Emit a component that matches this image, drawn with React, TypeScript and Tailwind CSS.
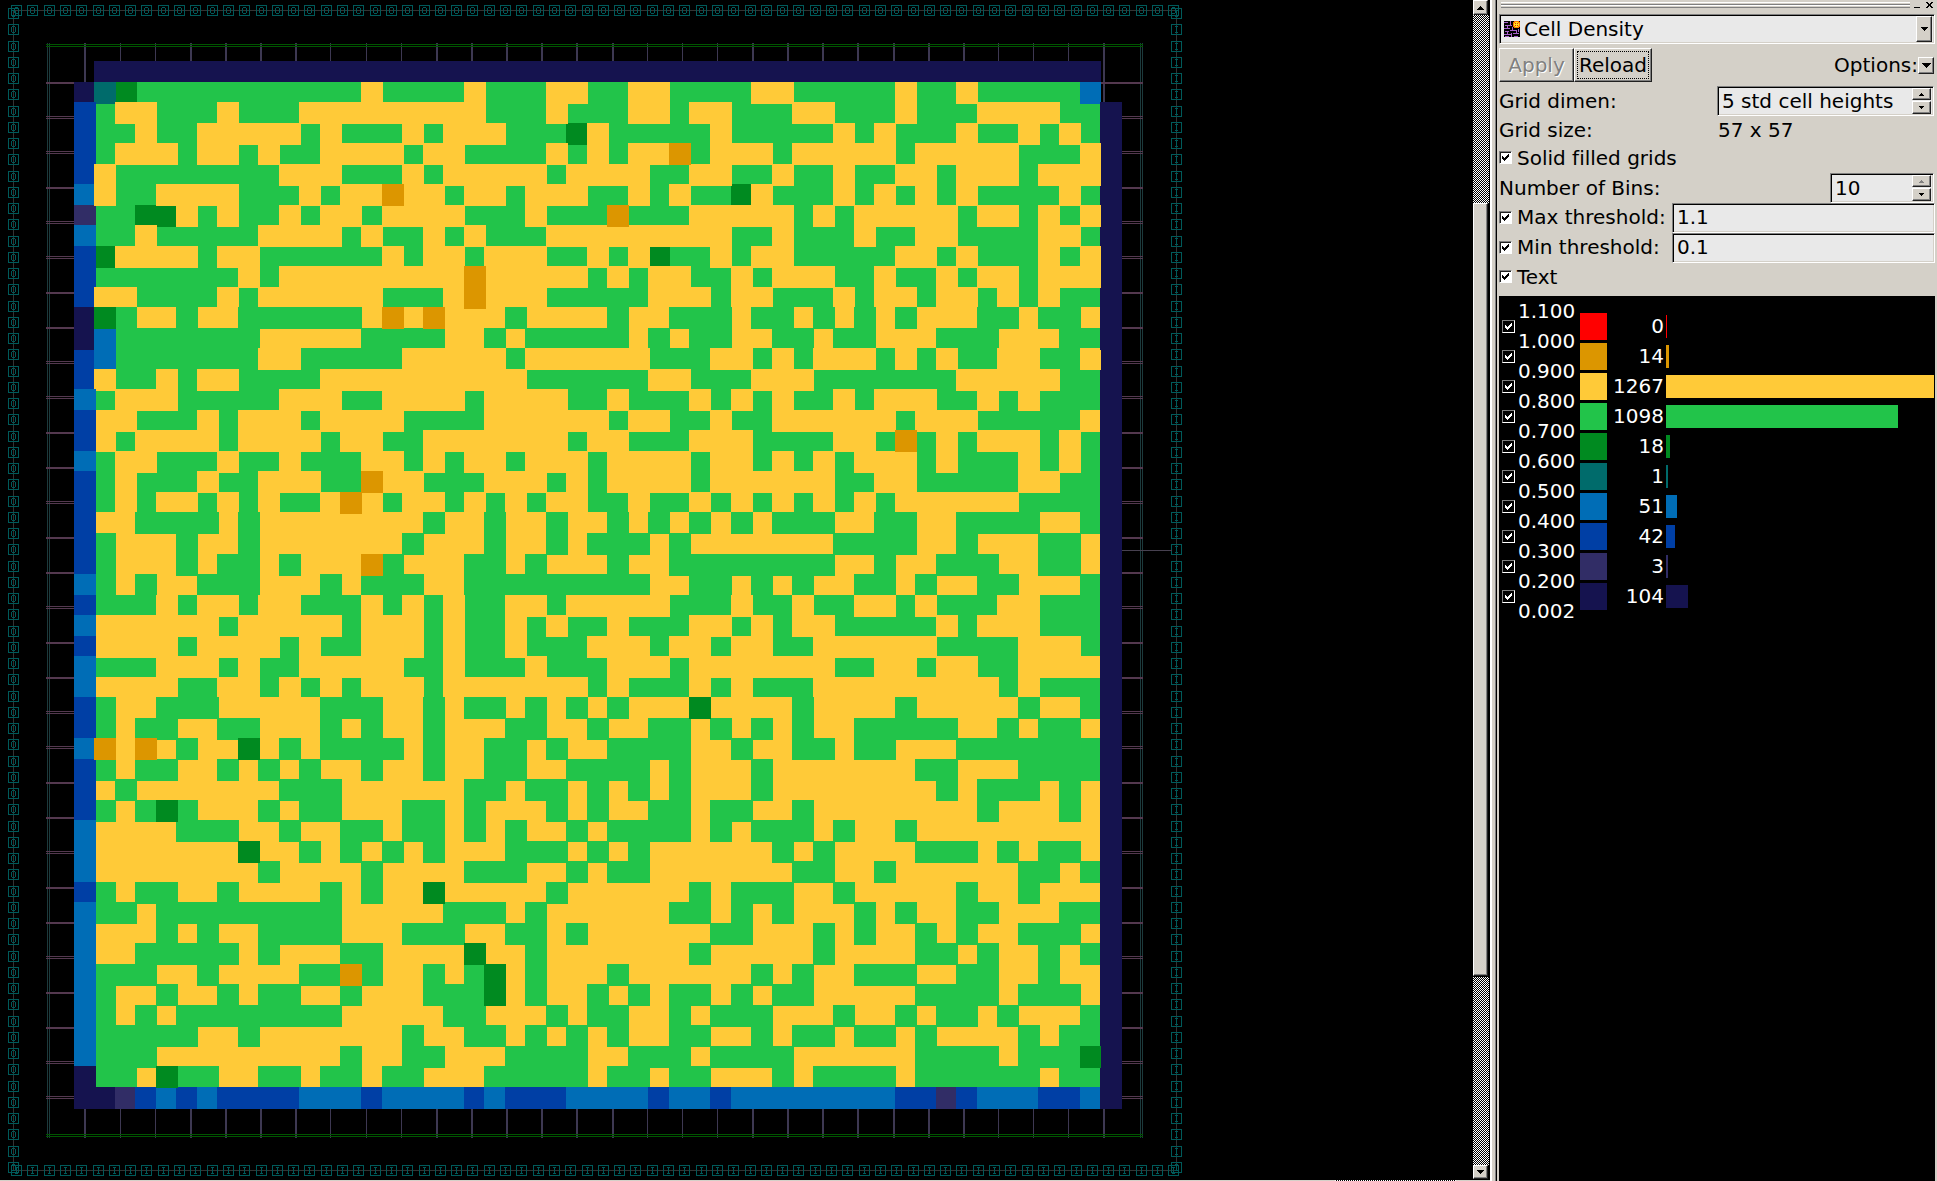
import React from "react";

const COLORS: Record<string, string> = {
  r: "#ff0000",
  o: "#dc9600",
  y: "#ffca38",
  g: "#22c44a",
  d: "#008a20",
  t: "#006b6b",
  b: "#006db6",
  B: "#003fa5",
  p: "#312d66",
  n: "#15134f",
};

// One string per grid row; each token is a bin code and the column where it starts.
const ROWS: string[] = [
  ".0 n1 .50",
  "n0 t1 d2 g3 y14 g15 y19 g20 y23 g25 y27 g29 y33 g35 y40 g41 y43 g44 b49 .50",
  "B0 g1 y2 g4 y7 g8 y11 g20 y23 g24 y27 g29 y30 g32 y35 g37 y40 g41 y44 g48 n50",
  "B0 g1 y3 g4 y6 g11 y12 g13 y16 g17 y18 g21 d24 y25 g26 y31 g32 y37 g38 y39 g40 y43 g44 y46 g47 y48 g49 n50",
  "B0 g1 y2 g5 y6 g8 y9 g10 y12 g16 y17 g19 y23 g24 y25 g26 y27 o29 g30 y31 g34 y35 g40 y41 g46 y49 n50",
  "B0 y1 g2 y10 g13 y16 g17 y18 g23 y24 g28 y30 g32 y34 g35 y37 g38 y40 g42 y43 g46 y47 n50",
  "b0 y1 g2 y4 g8 y11 g12 y13 o15 y16 g18 y19 g21 y22 g25 y27 g28 y29 g30 d32 y33 g34 y37 g38 y39 g40 y41 g42 y43 g44 y48 g49 n50",
  "p0 g1 d3 y5 g6 y7 g8 y10 g11 y12 g14 y15 g19 y22 g23 o26 g27 y30 g35 y36 g37 y38 g43 y44 g46 y47 g48 y49 n50",
  "b0 g1 y3 g4 y9 g13 y14 g15 y17 g18 y19 g20 y23 g32 y34 g35 y38 g39 y41 g43 y47 g49 n50",
  "B0 d1 y2 g6 y7 g9 y15 g16 y17 g19 y20 g23 y25 g26 y27 d28 g29 y31 g32 y33 g35 y40 g42 y43 g44 y47 g48 y49 n50",
  "B0 g1 y8 g9 y10 o19 y20 g25 y26 g27 y28 g30 y32 g33 y34 g37 y39 g40 y42 g43 y44 g46 y47 n50",
  "B0 y1 g3 y7 g8 y9 g15 y18 o19 y20 g23 y28 g31 y32 g34 y37 g38 y39 g41 y42 g44 y45 g46 y47 g48 n50",
  "n0 d1 g2 y3 g5 y6 g8 y14 o15 y16 o17 y18 g21 y22 g26 y27 g29 y32 g33 y35 g36 y37 g38 y39 g40 y41 g44 y46 g47 y49 n50",
  "n0 b1 g2 y9 g14 y18 g20 y21 g22 y27 g28 y29 g30 y32 g34 y36 g37 y39 g42 y45 g48 n50",
  "B0 b1 g2 y9 g11 y16 g21 y22 g28 y31 g33 y34 g35 y36 g39 y40 g41 y42 g43 y45 g47 y49 n50",
  "B0 y1 g2 y4 g5 y6 g8 y12 g22 y28 g30 y33 g36 y43 g48 n50",
  "b0 g1 y2 g5 y10 g13 y15 g19 y20 g24 y26 g27 y30 g31 y32 g33 y34 g35 y37 g38 y39 g42 y44 g45 y46 g47 n50",
  "B0 y1 g3 y6 g7 y8 g11 y12 g16 y20 g26 y27 g29 y31 g32 y34 g40 y41 g44 y49 n50",
  "B0 y1 g2 y3 g7 y8 g12 y13 g15 y17 g24 y25 g27 y30 g33 y37 g39 o40 g41 y42 g43 y44 g47 y48 g49 n50",
  "b0 g1 y2 g4 y7 g8 y10 g11 y14 g16 y17 g18 y19 g21 y22 g25 y26 g30 y31 g33 y34 g35 y36 g37 y38 g41 y42 g43 y46 g47 y48 g49 n50",
  "B0 g1 y2 g3 y6 g7 y9 g12 o14 y15 g17 y20 g23 y24 g25 y26 g30 y31 g37 y39 g41 y46 g48 n50",
  "B0 g1 y2 g3 y4 g6 y7 g8 y9 g10 y12 o13 y14 g15 y16 g18 y19 g20 y21 g22 y23 g25 y27 g28 y30 g31 y32 g33 y34 g35 y36 g37 y38 g39 y40 g46 n50",
  "B0 y1 g3 y7 g8 y9 g17 y18 g20 y21 g23 y24 g26 y27 g28 y29 g30 y31 g32 y33 g34 y37 g39 y41 g43 y47 g49 n50",
  "B0 g1 y2 g5 y6 g8 y9 g16 y17 g20 y21 g23 y24 g25 y28 g29 y30 g37 y41 g43 y44 g47 y49 n50",
  "B0 g1 y2 g5 y6 g7 y9 g10 y11 o14 g15 y16 g19 y21 g22 y23 g26 y27 g29 y37 g39 y40 g42 y45 g47 y49 n50",
  "b0 g1 y2 g3 y4 g6 y9 g12 y13 g14 y17 g19 y28 g30 y32 g33 y34 g35 y36 g38 y40 g41 y42 g44 y46 g49 n50",
  "B0 g1 y4 g5 y6 g8 y9 g11 y14 g15 y16 g17 y18 g19 y21 g23 y24 g29 y32 g33 y35 g36 y38 g40 y41 g42 y45 g47 n50",
  "b0 y1 g7 y8 g13 y14 g17 y18 g19 y21 g22 y23 g24 y26 g27 y30 g32 y33 g34 y35 g37 y42 g43 y44 g47 n50",
  "B0 y1 g5 y6 g10 y11 g12 y14 g17 y18 g19 y21 g22 y25 g28 y29 g31 y32 g34 y36 g42 y46 g49 n50",
  "b0 g1 y4 g7 y8 g9 y11 g16 y18 g19 y22 g23 y26 g29 y30 g37 y39 g41 y42 g44 y46 n50",
  "b0 y1 g5 y7 g9 y10 g11 y12 g13 y14 g17 y18 g25 y26 g27 y30 g31 y32 g33 y36 g45 y46 g47 n50",
  "B0 g1 y2 g4 y7 g12 y15 g17 y18 g19 y21 g22 y23 g24 y25 g26 y27 d30 y31 g35 y36 g40 y41 g46 y47 g49 n50",
  "B0 g1 y2 g3 y5 g7 y9 g12 y13 g14 y15 g17 y18 g21 y23 g25 y26 g28 y30 g31 y32 g33 y34 g35 y36 g38 y43 g45 y46 g47 y49 n50",
  "b0 o1 y2 o3 y4 g5 y6 d8 y9 g10 y11 g12 y16 g17 y18 g20 y22 g23 y24 g26 y30 g32 y33 g35 y37 g38 y40 g43 n50",
  "B0 g1 y2 g3 y5 g7 y8 g9 y10 g11 y12 g14 y15 g17 y18 g20 y22 g24 y28 g29 y30 g33 y34 g41 y43 g46 n50",
  "B0 y1 g2 y3 g10 y13 g19 y21 g22 y24 g25 y26 g27 y28 g29 y30 g33 y34 g42 y43 g44 y47 g48 y49 n50",
  "B0 g1 y2 g3 d4 g5 y6 g9 y10 g11 y13 g16 y18 g19 y20 g23 y24 g25 y26 g28 y30 g31 y33 g35 y36 g44 y45 g48 y49 n50",
  "b0 y1 g5 y8 g10 y11 g13 y15 g16 y18 g19 y20 g21 y22 g24 y25 g26 y30 g31 y32 g33 y36 g37 y38 g40 y41 n50",
  "b0 y1 d8 y9 g11 y12 g13 y14 g15 y16 g17 y18 g21 y24 g25 y26 g27 y28 g34 y35 g36 y37 g41 y44 g45 y46 g47 y49 n50",
  "b0 y1 g9 y10 g14 y15 g19 y22 g24 y25 g26 y28 g35 y37 g39 y40 g46 y48 g49 n50",
  "B0 g1 y2 g3 y5 g7 y8 g12 y13 g14 y15 d17 y18 g23 y24 g30 y31 g32 y35 g37 y38 g43 y44 g46 y47 n50",
  "b0 g1 y3 g4 y13 g18 y21 g22 y23 g29 y31 g32 y33 g34 y35 g38 y39 g40 y41 g43 y45 g48 n50",
  "b0 y1 g4 y5 g6 y7 g9 y13 g16 y19 g21 y23 g24 y25 g31 y33 g36 y37 g38 y39 g41 y42 g43 y44 g46 y49 n50",
  "b0 y1 g3 y8 g9 y10 g13 y15 d19 y20 g22 y23 g30 y31 g36 y37 g41 y43 g44 y45 g47 y48 g49 n50",
  "b0 g1 y4 g6 y7 g11 o13 g14 y15 g17 y18 g19 d20 y21 g22 y23 g26 y27 g33 y34 g35 y36 g38 y41 g43 y45 g47 y48 n50",
  "b0 g1 y2 g4 y5 g7 y8 g9 y11 g13 y14 g17 d20 y21 g22 y23 g25 y26 g27 y28 g29 y31 g32 y33 g34 y36 g41 y45 g46 y49 n50",
  "b0 g1 y2 g3 y4 g5 y13 g18 y20 g23 y24 g25 y27 g29 y30 g31 y34 g37 y38 g40 y41 g42 y44 g45 y46 g49 n50",
  "b0 g1 y6 g8 y9 g16 y17 g19 y21 g22 y23 g24 y25 g26 y27 g29 y31 g33 y34 g35 y37 g38 y40 g41 y42 g46 y47 g48 n50",
  "b0 g1 y4 g13 y14 g16 y18 g21 y25 g27 y30 g31 y35 g41 y45 g46 d49 n50",
  "n0 g1 y3 d4 g5 y7 g9 y11 g12 y14 g15 y17 g20 y25 g26 y28 g29 y31 g34 y35 g36 y40 g41 y47 g48 n50",
  "n0 p2 B3 b4 B5 b6 B7 b11 B14 b15 B19 b20 B21 b24 B28 b29 B31 b32 B40 p42 B43 b44 B47 b49 n50",
];

// Rows whose green cells are painted above their yellow neighbours.
const greenOnTop = (r: number) =>
  r === 12 || r === 13 || (r >= 22 && r <= 25) || r >= 31;

const colX = (c: number) => Math.floor(74.05 + 20.53 * c);
const rowY = (r: number) => Math.floor(61.6 + 20.517 * r);

type Run = { x: number; y: number; w: number; fill: string; z: number };

const RUNS: Run[] = ROWS.flatMap((row, r) => {
  const tokens = row.split(" ").map((t) => ({ k: t[0], c: Number(t.slice(1)) }));
  return tokens
    .map((t, i) => {
      const end = i + 1 < tokens.length ? tokens[i + 1].c : 51;
      let z: number;
      if (r === 0) z = -1;
      else if (greenOnTop(r)) z = t.k === "y" ? 0 : t.k === "g" ? 3 : t.k === "d" || t.k === "o" ? 5 : 4;
      else z = t.k === "g" ? 0 : t.k === "d" ? 1 : t.k === "y" ? 3 : t.k === "o" ? 5 : r > 15 ? 4 : 2;
      const right = Math.min(colX(end - 1) + 22, end === 50 ? 1101 : 1122);
      return { x: colX(t.c), y: rowY(r), w: right - colX(t.c), fill: t.k, z };
    })
    .filter((run) => run.fill !== ".");
}).sort((a, b) => a.z - b.z);

const V_THIN = [1, 2, 7, 8, 9, 16, 17, 18, 26, 27, 28];
const H_DOUBLE = [1, 2, 4, 5, 8, 9, 12, 15, 18, 19, 22, 25, 28, 29];
const THIRTY = Array.from({ length: 30 }, (_, i) => i);
const PADS = Array.from({ length: 72 }, (_, i) => i);

function Pad({ x, y, kind }: { x: number; y: number; kind: "O" | "I" }) {
  return (
    <g transform={`translate(${x} ${y})`} fill="none" stroke="#005a5a" strokeWidth="1">
      <rect x="0.5" y="0.5" width="10" height="10" />
      {kind === "O" ? (
        <path d="M4 2.5H7M4 8.5H7M3.5 3V8M7.5 3V8" />
      ) : (
        <path d="M4 2.5H7M4 8.5H7M5.5 3V8" />
      )}
    </g>
  );
}

function LayoutCanvas() {
  return (
    <svg width="1473" height="1180" viewBox="0 0 1473 1180" shapeRendering="crispEdges" className="block bg-black">
      <g fill="#333333">
        <rect x="13" y="10" width="1163" height="1" />
        <rect x="13" y="1170" width="1163" height="1" />
        <rect x="13" y="10" width="1" height="1160" />
        <rect x="1176" y="10" width="1" height="1160" />
      </g>
      {PADS.map((i) => (
        <React.Fragment key={i}>
          <Pad x={Math.round(11 + i * 16.3)} y={5} kind="O" />
          <Pad x={Math.round(11 + i * 16.3)} y={1165} kind="I" />
          <Pad x={8} y={Math.round(8 + i * 16.25)} kind="O" />
          <Pad x={1171} y={Math.round(8 + i * 16.25)} kind="I" />
        </React.Fragment>
      ))}
      <g fill="#1c3a3c">
        <rect x="47" y="43" width="1" height="1095" />
        <rect x="49" y="43" width="1" height="1095" />
        <rect x="1140" y="43" width="1" height="1095" />
        <rect x="1142" y="43" width="1" height="1095" />
      </g>
      {THIRTY.map((k) => (
        <rect key={k} x={Math.floor(84.9 + 35.14 * k)} y="43" width={V_THIN.includes(k) ? 1 : 2} height="1095" fill="#3d3852" />
      ))}
      {THIRTY.map((k) => {
        const y = Math.round(82 + 35 * k);
        return H_DOUBLE.includes(k) ? (
          <g key={k} fill="#54384f">
            <rect x="46" y={y - 1} width="1097" height="1" />
            <rect x="46" y={y + 1} width="1097" height="1" />
          </g>
        ) : (
          <rect key={k} x="46" y={y} width="1097" height="2" fill="#54384f" />
        );
      })}
      <rect x="1122" y="550" width="50" height="1" fill="#474150" />
      <g fill="#005500">
        <rect x="46" y="44" width="1097" height="1" />
        <rect x="46" y="46" width="1097" height="1" />
        <rect x="46" y="1134" width="1097" height="1" />
        <rect x="46" y="1136" width="1097" height="1" />
      </g>
      <rect x="94" y="61" width="1007" height="1048" fill="#000" />
      {RUNS.map((run, i) => (
        <rect key={i} x={run.x} y={run.y} width={run.w} height="22" fill={COLORS[run.fill]} />
      ))}
    </svg>
  );
}

const ARROW_SIZES = { sm: [5, 3], md: [7, 4], lg: [9, 5] } as const;

function Arrow({ up = false, size = "md", color = "#000" }: { up?: boolean; size?: "sm" | "md" | "lg"; color?: string }) {
  const [w, h] = ARROW_SIZES[size];
  return (
    <svg width={w} height={h} viewBox={`0 0 ${w} ${h}`} className="block" shapeRendering="crispEdges">
      {Array.from({ length: h }, (_, i) => (
        <rect key={i} x={i} y={up ? h - 1 - i : i} width={w - 2 * i} height="1" fill={color} />
      ))}
    </svg>
  );
}

const RAISED =
  "flex items-center justify-center bg-[#d4d0c8] border border-t-white border-l-white border-r-[#202020] border-b-[#202020] shadow-[inset_-1px_-1px_0_#808080]";
const SUNKEN =
  "flex items-center bg-[#e9e9e9] border border-t-[#808080] border-l-[#808080] border-r-white border-b-white shadow-[inset_1px_1px_0_#000,inset_-1px_-1px_0_#d4d0c8]";

function Tick({ dark = false }: { dark?: boolean }) {
  return (
    <svg width="9" height="9" viewBox="0 0 9 9" className="block" shapeRendering="crispEdges">
      <path
        d="M1 3h1v1h1v1h1V4h1V3h1V2h1V1h1v3H7v1H6v1H5v1H4v1H3V7H2V6H1Z"
        fill={dark ? "#fff" : "#000"}
      />
    </svg>
  );
}

function Check() {
  return (
    <span className="flex h-[13px] w-[13px] shrink-0 items-center justify-center border border-t-[#808080] border-l-[#808080] border-r-white border-b-white bg-white shadow-[inset_1px_1px_0_#202020]">
      <Tick />
    </span>
  );
}

function Spin({ text, width, upDisabled = false }: { text: string; width: string; upDisabled?: boolean }) {
  return (
    <div className={`${SUNKEN} h-[30px] ${width} justify-between pl-[4px] pr-[2px]`}>
      <span>{text}</span>
      <span className="flex flex-col gap-px">
        <span className={`${RAISED} h-[12px] w-[19px]`}>
          <Arrow up size="sm" color={upDisabled ? "#808080" : "#000"} />
        </span>
        <span className={`${RAISED} h-[13px] w-[19px]`}>
          <Arrow size="sm" />
        </span>
      </span>
    </div>
  );
}

function MapIcon() {
  return (
    <svg width="16" height="16" viewBox="0 0 16 16" shapeRendering="crispEdges" className="block">
      <rect width="16" height="16" fill="#000" />
      <path
        d="M0 1.5H4M6.5 0V4M1 4.5H8M3.5 4V7M0 7.5H6M8.5 6V10M6 9.5H12M1 10.5H5M3.5 10V13M0 13.5H7M9 12.5H15M12.5 9V12M14.5 8V11M7.5 12V16M1 15.5H5M10 15.5H14"
        stroke="#a55fc8"
        strokeWidth="1"
        fill="none"
      />
      <path d="M10 0h5v1h1v5h-1v1h-5V6H9V1h1Z" fill="#ff7a00" />
      <path d="M11 1h3v1h1v3h-1v1h-3V5h-1V2h1Z" fill="#ffe81a" />
      <path d="M11 2h1v1h-1ZM13 2h1v1h-1ZM11 4h1v1h-1ZM13 4h1v1h-1Z" fill="#e02020" />
    </svg>
  );
}

const LABELS = ["1.100", "1.000", "0.900", "0.800", "0.700", "0.600", "0.500", "0.400", "0.300", "0.200", "0.002"];
const BINS = [
  { k: "r", n: 0, w: 1 },
  { k: "o", n: 14, w: 3 },
  { k: "y", n: 1267, w: 268 },
  { k: "g", n: 1098, w: 232 },
  { k: "d", n: 18, w: 4 },
  { k: "t", n: 1, w: 2 },
  { k: "b", n: 51, w: 11 },
  { k: "B", n: 42, w: 9 },
  { k: "p", n: 3, w: 2 },
  { k: "n", n: 104, w: 22 },
];

function Histogram() {
  return (
    <div className="mr-[2px] flex flex-1 bg-black text-white">
      <div className="mt-[14px] ml-[3px] flex w-[16px] flex-col">
        {BINS.map((b) => (
          <div key={b.k} className="flex h-[30px] items-center">
            <span className="mt-[3px] flex h-[13px] w-[13px] items-center justify-center border border-t-[#808080] border-l-[#808080] border-r-white border-b-white bg-black">
              <Tick dark />
            </span>
          </div>
        ))}
      </div>
      <div className="flex w-[62px] flex-col">
        {LABELS.map((l) => (
          <span key={l} className="h-[30px] leading-[30px]">{l}</span>
        ))}
      </div>
      <div className="mt-[14px] flex flex-1 flex-col">
        {BINS.map((b) => (
          <div key={b.k} className="flex h-[30px] items-center">
            <span className="mt-[3px] h-[27px] w-[27px]" style={{ background: COLORS[b.k] }} />
            <span className="mr-[2px] w-[57px] pt-[2px] text-right leading-[28px]">{b.n}</span>
            <span className="mt-[3px] h-[23px]" style={{ background: COLORS[b.k], width: b.w }} />
          </div>
        ))}
      </div>
    </div>
  );
}

function Panel() {
  return (
    <div className="flex w-[438px] flex-col bg-[#d4d0c8] pt-[2px] text-[20px] leading-[28px] text-black">
      <div className="flex h-[12px] pl-[2px]">
        <div className="flex h-[6px] w-[409px] flex-col">
          <div className="h-[3px] border-t border-b border-t-white border-b-[#808080]" />
          <div className="h-[3px] border-t border-b border-t-white border-b-[#808080]" />
        </div>
        <svg width="22" height="8" viewBox="0 0 22 8" className="ml-[4px]" shapeRendering="crispEdges">
          <path d="M0 5H6V6H0Z" fill="#000" />
          <path d="M12 0h2v1h1v1h1V1h1V0h2v1h-1v1h-1v2h1v1h1v1h-2V5h-1V4h-1v1h-1v1h-2V5h1V4h1V2h-1V1h-1Z" fill="#000" />
        </svg>
      </div>
      <div className={`${SUNKEN} h-[30px] w-[436px] pr-[2px] pl-[4px]`}>
        <MapIcon />
        <span className="ml-[4px] flex-1">Cell Density</span>
        <span className={`${RAISED} h-[26px] w-[16px]`}>
          <Arrow />
        </span>
      </div>
      <div className="mt-[4px] flex h-[34px] items-center">
        <div className={`${RAISED} h-[34px] w-[75px] text-[#808080] [text-shadow:1px_1px_0_#fff]`}>Apply</div>
        <div className={`${RAISED} h-[34px] w-[78px]`}>
          <span className="flex h-[28px] w-[72px] items-center justify-center border border-dotted border-black">Reload</span>
        </div>
        <span className="ml-auto">Options:</span>
        <div className={`${RAISED} mr-[3px] h-[17px] w-[16px]`}>
          <Arrow size="lg" />
        </div>
      </div>
      <div className="mt-[4px] flex h-[30px] items-center justify-between pr-[3px]">
        <span>Grid dimen:</span>
        <Spin text="5 std cell heights" width="w-[217px]" />
      </div>
      <div className="flex h-[28px] items-center">
        <span className="w-[219px]">Grid size:</span>
        <span>57 x 57</span>
      </div>
      <div className="flex h-[29px] items-center gap-[5px] pb-[2px]">
        <Check />
        <span>Solid filled grids</span>
      </div>
      <div className="flex h-[30px] items-center justify-between pr-[3px]">
        <span>Number of Bins:</span>
        <Spin text="10" width="w-[104px]" upDisabled />
      </div>
      <div className="flex h-[30px] items-center">
        <div className="flex w-[173px] items-center gap-[5px] pb-[2px]">
          <Check />
          <span>Max threshold:</span>
        </div>
        <div className={`${SUNKEN} h-[30px] w-[263px] pb-[2px] pl-[4px]`}>1.1</div>
      </div>
      <div className="flex h-[30px] items-center">
        <div className="flex w-[173px] items-center gap-[5px] pb-[2px]">
          <Check />
          <span>Min threshold:</span>
        </div>
        <div className={`${SUNKEN} h-[30px] w-[263px] pb-[2px] pl-[4px]`}>0.1</div>
      </div>
      <div className="flex h-[33px] items-center gap-[5px] pb-[6px]">
        <Check />
        <span>Text</span>
      </div>
      <Histogram />
    </div>
  );
}

function Dither({ id, width, height }: { id: string; width: number; height: number }) {
  return (
    <svg width={width} height={height} className="block shrink-0 bg-black" shapeRendering="crispEdges">
      <defs>
        <pattern id={id} width="2" height="2" patternUnits="userSpaceOnUse">
          <rect width="1" height="1" fill="#fff" />
          <rect x="1" y="1" width="1" height="1" fill="#fff" />
        </pattern>
      </defs>
      <rect width={width} height={height} fill={`url(#${id})`} />
    </svg>
  );
}

export default function App() {
  return (
    <div className="flex h-[1181px] w-[1937px] overflow-hidden bg-black [font-family:'DejaVu_Sans',sans-serif] [font-variant-ligatures:none]">
      <div className="flex flex-col">
        <div className="flex">
          <LayoutCanvas />
          <div className="flex h-[1180px] w-[17px] flex-col pr-px">
            <div className={`${RAISED} h-[15px] w-[15px]`}>
              <Arrow up />
            </div>
            <Dither id="track-top" width={16} height={188} />
            <div className={`${RAISED} h-[773px] w-[15px]`} />
            <div className="h-px" />
            <Dither id="track-bottom" width={16} height={188} />
            <div className={`${RAISED} h-[14px] w-[15px]`}>
              <Arrow />
            </div>
          </div>
        </div>
        <div className="flex h-px bg-[#d4d0c8] pl-[1335px]">
          <Dither id="status-edge" width={121} height={1} />
        </div>
      </div>
      <div className="w-[9px] border-r-2 border-l-2 border-r-[#d4d0c8] border-l-white bg-[#d4d0c8]">
        <div className="ml-[3px] h-full w-[2px] border-l border-l-[#808080] bg-black" />
      </div>
      <Panel />
    </div>
  );
}
